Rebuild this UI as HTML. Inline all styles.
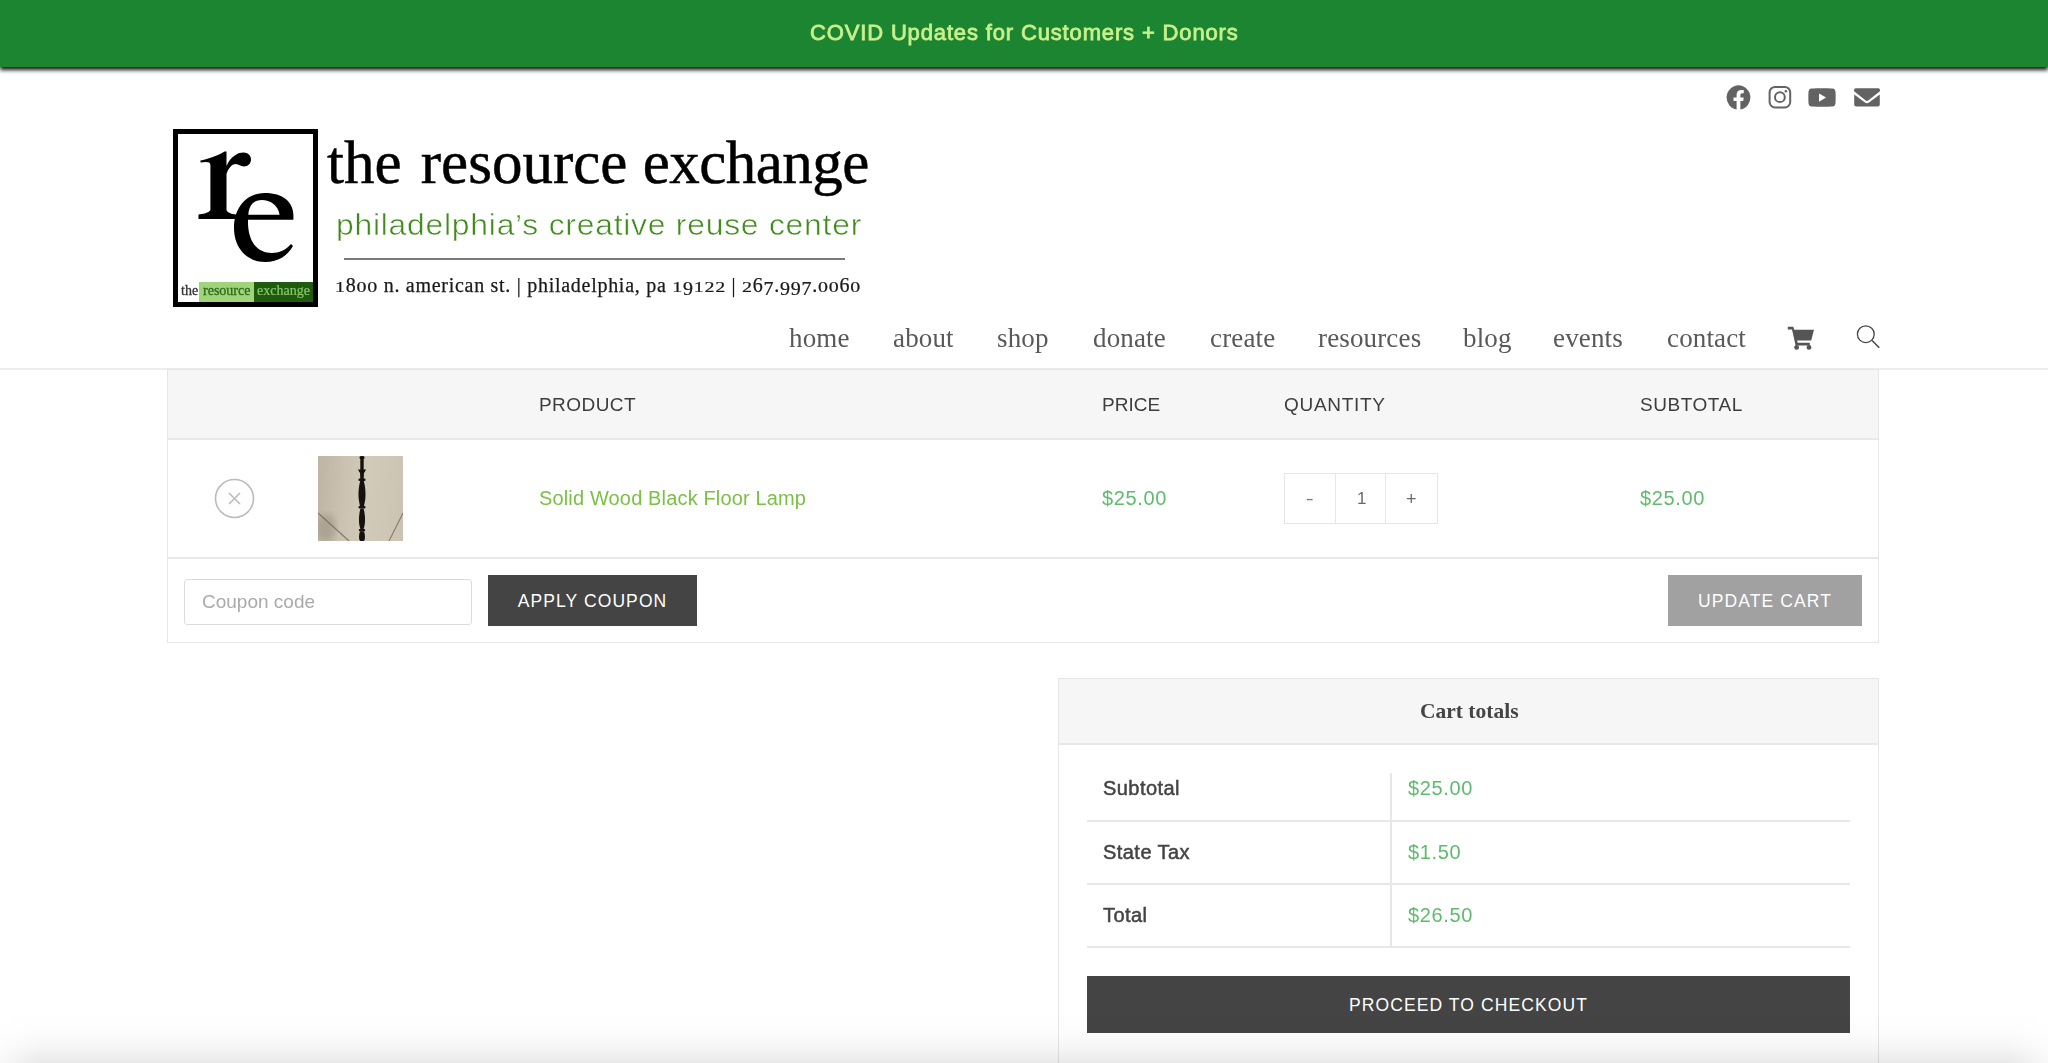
<!DOCTYPE html>
<html><head><meta charset="utf-8">
<style>
*{margin:0;padding:0;box-sizing:border-box}
html,body{width:2048px;height:1063px;overflow:hidden;background:#fff;font-family:"Liberation Sans",sans-serif}
.a{position:absolute;white-space:nowrap;will-change:transform}
#topbar{position:absolute;left:0;top:0;width:2048px;height:67px;background:#1c8531;box-shadow:0 3px 4px rgba(0,0,0,.92);z-index:5}
#topbar .t{position:absolute;will-change:transform;left:810px;top:20px;font-size:22px;letter-spacing:0.85px;color:#c8f08c;-webkit-text-stroke:0.8px #c8f08c}
.serif{font-family:"Liberation Serif",serif}
.nav{font-family:"Liberation Serif",serif;font-size:27px;color:#595959;top:323px;letter-spacing:0.15px}
#hdrline{position:absolute;left:0;top:368px;width:2048px;height:2px;background:#ececec}
.tbl{position:absolute;border:1px solid #e6e6e6}
.hdr{position:absolute;background:#f6f6f6}
.hline{position:absolute;height:2px;background:#e8e8e8}
.th{font-size:19px;color:#3d3d3d;top:394px}
.tl{font-size:20px;color:#444;-webkit-text-stroke:0.5px #444;letter-spacing:0.45px}
.os{display:inline-block;transform:scaleY(0.74);transform-origin:50% 86%}
.od{display:inline-block;transform:translateY(4px) scaleY(0.92)}
.green1{color:#7bbf45}
.green2{color:#5fbb6d;letter-spacing:0.65px}
.btn{position:absolute;color:#fff;font-size:17.5px;letter-spacing:1.1px;text-align:center}
#shade{position:absolute;left:0;top:1013px;width:2048px;height:50px;background:linear-gradient(to bottom,rgba(0,0,0,0) 0%,rgba(0,0,0,.012) 40%,rgba(0,0,0,.04) 70%,rgba(0,0,0,.085) 100%);z-index:10;-webkit-mask-image:linear-gradient(to right,rgba(0,0,0,.3),#000 40px,#000 2008px,rgba(0,0,0,.3))}
</style></head><body>
<div id="topbar"><div class="t">COVID Updates for Customers + Donors</div></div>

<!-- social icons -->
<svg class="a" style="left:1726px;top:85px" width="25" height="25" viewBox="0 0 25 25"><path fill="#636363" d="M12.5 0.3A12.2 12.2 0 0 0 10.6 24.5V15.9H7.5V12.5H10.6V9.8C10.6 6.8 12.4 5.1 15.2 5.1C16.5 5.1 17.8 5.3 17.8 5.3V8.3H16.3C14.8 8.3 14.4 9.2 14.4 10.2V12.5H17.7L17.2 15.9H14.4V24.5A12.2 12.2 0 0 0 12.5 0.3Z"/></svg>
<svg class="a" style="left:1768px;top:85px" width="24" height="24" viewBox="0 0 24 24"><rect x="1.6" y="1.9" width="20.6" height="20.6" rx="5.5" fill="none" stroke="#636363" stroke-width="2"/><circle cx="11.9" cy="12.2" r="4.9" fill="none" stroke="#636363" stroke-width="2"/><circle cx="17.9" cy="6.2" r="1.3" fill="#636363"/></svg>
<svg class="a" style="left:1808px;top:88px" width="28" height="19" viewBox="0 0 28 19"><path fill="#636363" d="M3.5 0.4C8 0.1 20 0.1 24.5 0.4C26.5 0.6 27.3 1.8 27.5 4C27.7 7 27.7 12 27.5 15C27.3 17.2 26.5 18.4 24.5 18.6C20 18.9 8 18.9 3.5 18.6C1.5 18.4 0.7 17.2 0.5 15C0.3 12 0.3 7 0.5 4C0.7 1.8 1.5 0.6 3.5 0.4Z"/><path fill="#fff" d="M11 5.4V13.7L18.1 9.5Z"/></svg>
<svg class="a" style="left:1854px;top:88px" width="26" height="19" viewBox="0 0 26 19"><path fill="#636363" d="M2 0.3H24A2 2 0 0 1 25.6 3.6L14.2 12.5A2 2 0 0 1 11.8 12.5L0.4 3.6A2 2 0 0 1 2 0.3Z"/><path fill="#636363" d="M0.2 6.5L11 14.6A3.3 3.3 0 0 0 15 14.6L25.8 6.5V16.6A2 2 0 0 1 23.8 18.6H2.2A2 2 0 0 1 0.2 16.6Z"/></svg>

<!-- logo box -->
<div class="a" style="left:173px;top:129px;width:145px;height:178px;border:5px solid #000"></div>
<div class="a" style="left:178px;top:282px;width:21px;height:20px;background:#fff"></div>
<div class="a" style="left:199px;top:282px;width:55px;height:20px;background:#9fd47a"></div>
<div class="a" style="left:254px;top:282px;width:59px;height:20px;background:#1f5a0f"></div>
<svg class="a" style="left:195px;top:148px" width="64" height="76" viewBox="0 0 64 76"><path fill="#000" d="M5.5 12.4C12 11.5 22 8 29.5 3.5L31.5 3.5L31.5 18C35.5 9 42 4.5 48.5 4.5C53 4.5 56 7.5 56 11.5C56 15.5 53 18.5 49 18.5C45.5 18.5 43.5 16 41 16C36.5 16 33 21 31.5 26L31.5 62C32.5 65 37 66 41 66.5L41 71L3.5 71L3.5 66.5C7.5 66 14 65 15.4 62L15.4 17C15.4 13.5 11 13.8 5.5 14.5Z"/></svg>
<svg class="a" style="left:230px;top:190px" width="68" height="76" viewBox="0 0 68 76"><path fill="#000" fill-rule="evenodd" d="M63.4 24.7C63 12 53 3 35 3C16 3 4 18 4 38C4 59 18 72 35 72C49 72 58 65 63 56L61 54C56 60 49 63 42 63C27 63 18 51 18 32L18 29.7L63.4 29.7ZM18.3 24.7C19 14 25 10 32 10C40 10 48 15 49.6 24.7Z"/></svg>
<div class="a serif" style="left:181px;top:283px;font-size:14px;color:#333;line-height:16px;-webkit-text-stroke:0.3px #333">the</div>
<div class="a serif" style="left:203px;top:283px;font-size:14px;color:#2e6a1a;line-height:16px;-webkit-text-stroke:0.3px #2e6a1a">resource</div>
<div class="a serif" style="left:257px;top:283px;font-size:14px;color:#86c86a;line-height:16px;-webkit-text-stroke:0.2px #86c86a">exchange</div>

<div class="a serif" style="left:327px;top:128px;font-size:61px;color:#000;-webkit-text-stroke:0.5px #000"><span style="word-spacing:4px">the </span>resource <span style="letter-spacing:-0.5px">exchange</span></div>
<div class="a" style="left:336px;top:209px;font-size:29px;color:#418b1d;letter-spacing:0.67px;-webkit-text-stroke:0.5px #fff;transform:scaleX(1.1);transform-origin:0 0">philadelphia’s creative reuse center</div>
<div class="a" style="left:344px;top:258px;width:501px;height:2px;background:#7a7a7a"></div>
<div class="a serif" style="left:335px;top:274px;font-size:20px;color:#1a1a1a;letter-spacing:0.72px;-webkit-text-stroke:0.25px #1a1a1a"><span class="os">1</span>8<span class="os">0</span><span class="os">0</span> n. american st. | philadelphia, pa <span class="os">1</span><span class="od">9</span><span class="os">1</span><span class="os">2</span><span class="os">2</span> | <span class="os">2</span>6<span class="od">7</span>.<span class="od">9</span><span class="od">9</span><span class="od">7</span>.<span class="os">0</span><span class="os">0</span>6<span class="os">0</span></div>

<!-- nav -->
<div class="a nav" style="left:789px">home</div>
<div class="a nav" style="left:893px">about</div>
<div class="a nav" style="left:997px">shop</div>
<div class="a nav" style="left:1093px">donate</div>
<div class="a nav" style="left:1210px">create</div>
<div class="a nav" style="left:1318px">resources</div>
<div class="a nav" style="left:1463px">blog</div>
<div class="a nav" style="left:1553px">events</div>
<div class="a nav" style="left:1667px">contact</div>

<svg class="a" style="left:1787px;top:326px" width="28" height="24" viewBox="0 0 28 24"><path fill="#555" d="M0.8 0.8H6.3L7.3 3.8H27L24.2 14.5H10.2L10.7 16.8H22.8V19.5H8.6L5 3.6H0.8Z"/><circle cx="9.6" cy="21.4" r="2.4" fill="#555"/><circle cx="22" cy="21.4" r="2.4" fill="#555"/></svg>
<svg class="a" style="left:1855px;top:324px" width="27" height="26" viewBox="0 0 27 26"><circle cx="10.8" cy="10.2" r="8.4" fill="none" stroke="#444" stroke-width="1.3"/><path d="M17 16.5L24.3 23.8" stroke="#444" stroke-width="1.5"/></svg>
<div id="hdrline"></div>

<!-- cart table -->
<div class="tbl" style="left:167px;top:369px;width:1712px;height:274px"></div>
<div class="hdr" style="left:168px;top:370px;width:1710px;height:69px"></div>
<div class="hline" style="left:168px;top:438px;width:1710px"></div>
<div class="hline" style="left:168px;top:557px;width:1710px"></div>
<div class="a th" style="left:539px;letter-spacing:0.45px">PRODUCT</div>
<div class="a th" style="left:1102px">PRICE</div>
<div class="a th" style="left:1284px;letter-spacing:0.7px">QUANTITY</div>
<div class="a th" style="left:1640px;letter-spacing:0.55px">SUBTOTAL</div>

<svg class="a" style="left:214px;top:478px" width="41" height="41" viewBox="0 0 41 41"><circle cx="20.5" cy="20.5" r="19" fill="none" stroke="#bbb" stroke-width="1.6"/><path d="M15 15L26 26M26 15L15 26" stroke="#bbb" stroke-width="1.6"/></svg>
<div class="a" style="left:318px;top:456px;width:85px;height:85px;background:linear-gradient(95deg,#bdb4a3 0%,#cac1b0 30%,#d2cab9 55%,#cfc7b6 80%,#cbc2b1 100%);overflow:hidden">
<svg width="85" height="85" viewBox="0 0 85 85" style="position:absolute;left:0;top:0">
<defs><filter id="bl"><feGaussianBlur stdDeviation="3"/></filter></defs>
<ellipse cx="8" cy="72" rx="10" ry="14" fill="#9a917f" opacity=".55" filter="url(#bl)"/>
<path d="M0 57L31 85" stroke="#6f685b" stroke-width="1.2" opacity=".8"/>
<path d="M85 57L71 85" stroke="#7b7467" stroke-width="1.1" opacity=".9"/>
<g fill="#15110d">
<rect x="41.5" y="0" width="5" height="3" rx="1.5"/>
<rect x="42.3" y="2" width="3.4" height="12"/>
<path d="M40 13.5h8l-1.5 3h-5z"/>
<path d="M42 16h4l-.3 7h-3.4z"/>
<rect x="40.5" y="22.5" width="7" height="2.5" rx="1"/>
<path d="M42.2 25C40.8 30 40.2 36 40.6 42C41 46 41.8 49 42.2 51H45.8C46.2 49 47 46 47.4 42C47.8 36 47.2 30 45.8 25Z"/>
<rect x="40.5" y="50" width="7" height="2.5" rx="1"/>
<path d="M42.4 52.5C41.2 57 40.8 62 41 66C41.2 69 41.8 71 42.4 73H45.6C46.2 71 46.8 69 47 66C47.2 62 46.8 57 45.6 52.5Z"/>
<rect x="40.8" y="73" width="6.4" height="2.2" rx="1"/>
<path d="M42 75.2C41 78 40.8 81 41.3 83.5L42.5 85.5H45.5L46.7 83.5C47.2 81 47 78 46 75.2Z"/>
</g></svg></div>
<div class="a green1" style="left:539px;top:487px;font-size:20px;letter-spacing:0.15px">Solid Wood Black Floor Lamp</div>
<div class="a" style="left:1284px;top:473px;width:154px;height:51px;border:1.5px solid #e6e6e6"></div>
<div class="a" style="left:1335px;top:473px;width:1.2px;height:51px;background:#e6e6e6"></div>
<div class="a" style="left:1385px;top:473px;width:1.2px;height:51px;background:#e6e6e6"></div>
<div class="a" style="left:1307px;top:489px;font-size:17px;color:#777;transform:scaleX(1.35)">-</div>
<div class="a" style="left:1357px;top:489px;font-size:17px;color:#6a6a6a">1</div>
<div class="a" style="left:1406px;top:489px;font-size:18px;color:#6a6a6a">+</div>
<div class="a green2" style="left:1102px;top:487px;font-size:20px">$25.00</div>
<div class="a green2" style="left:1640px;top:487px;font-size:20px">$25.00</div>

<div class="a" style="left:184px;top:579px;width:288px;height:46px;border:1.5px solid #dcdcdc;border-radius:3px"></div>
<div class="a" style="left:202px;top:591px;font-size:19px;color:#aaa">Coupon code</div>
<div class="btn" style="left:488px;top:575px;width:209px;height:51px;background:#444;line-height:53px">APPLY COUPON</div>
<div class="btn" style="left:1668px;top:575px;width:194px;height:51px;background:#a1a1a1;line-height:53px">UPDATE CART</div>

<!-- cart totals -->
<div class="tbl" style="left:1058px;top:678px;width:821px;height:420px"></div>
<div class="hdr" style="left:1059px;top:679px;width:819px;height:65px"></div>
<div class="hline" style="left:1059px;top:743px;width:819px"></div>
<div class="a serif" style="left:1420px;top:699px;font-size:21.5px;font-weight:bold;color:#444">Cart totals</div>
<div class="hline" style="left:1087px;top:820px;width:763px"></div>
<div class="hline" style="left:1087px;top:883px;width:763px"></div>
<div class="hline" style="left:1087px;top:946px;width:763px"></div>
<div class="a" style="left:1390px;top:773px;width:2px;height:174px;background:#e8e8e8"></div>
<div class="a tl" style="left:1103px;top:777px">Subtotal</div>
<div class="a tl" style="left:1103px;top:841px">State Tax</div>
<div class="a tl" style="left:1103px;top:904px">Total</div>
<div class="a green2" style="left:1408px;top:777px;font-size:20px">$25.00</div>
<div class="a green2" style="left:1408px;top:841px;font-size:20px">$1.50</div>
<div class="a green2" style="left:1408px;top:904px;font-size:20px">$26.50</div>
<div class="btn" style="left:1087px;top:976px;width:763px;height:57px;background:#444;line-height:58px">PROCEED TO CHECKOUT</div>

<div id="shade"></div>
</body></html>
